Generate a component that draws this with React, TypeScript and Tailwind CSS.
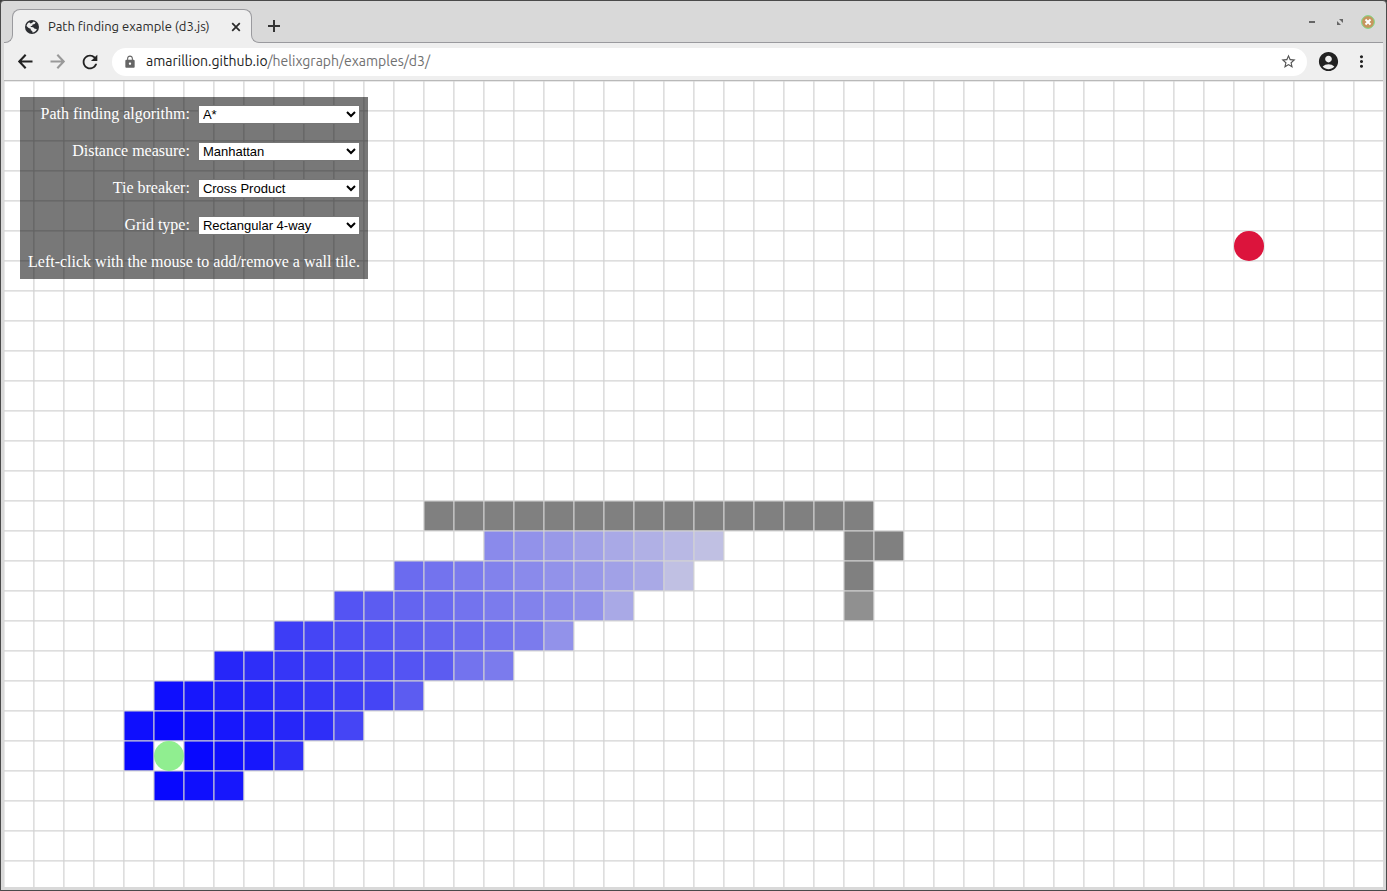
import { MdAccountCircle, MdLock, MdMoreVert, MdRefresh, MdStarBorder } from "react-icons/md";

const CELL = 30;
const COLUMNS = 90;
const ROWS = 50;
const START = { col: 5, row: 22 };
const GOAL = { col: 41, row: 5 };
const MAX_COST = 27.5;

// Explored columns per row; the last `detour` cells were reached two steps late.
const explored = [
  { row: 15, from: 16, to: 23, detour: 0 },
  { row: 16, from: 13, to: 22, detour: 1 },
  { row: 17, from: 11, to: 20, detour: 1 },
  { row: 18, from: 9, to: 18, detour: 1 },
  { row: 19, from: 7, to: 16, detour: 2 },
  { row: 20, from: 5, to: 13, detour: 1 },
  { row: 21, from: 4, to: 11, detour: 1 },
  { row: 22, from: 4, to: 9, detour: 1 },
  { row: 23, from: 5, to: 7, detour: 0 },
];

function costColor(cost: number) {
  const t = cost / MAX_COST;
  const rg = Math.round(211 * t);
  return `rgb(${rg}, ${rg}, ${Math.round(255 - 31 * t)})`;
}

function cellColor(col: number, row: number) {
  if (row === 14 && col >= 14 && col <= 28) return "#808080";
  if (row === 15 && (col === 28 || col === 29)) return "#808080";
  if (row === 16 && col === 28) return "#808080";
  if (row === 17 && col === 28) return "#909090";
  if (row === START.row && col === START.col) return "#ffffff";
  const span = explored.find((s) => s.row === row && col >= s.from && col <= s.to);
  if (!span) return "#ffffff";
  const distance = Math.abs(col - START.col) + Math.abs(row - START.row);
  return costColor(col > span.to - span.detour ? distance + 2 : distance);
}

const cells = Array.from({ length: COLUMNS * ROWS }, (_, i) => {
  const col = Math.floor(i / ROWS);
  const row = i % ROWS;
  return { col, row, fill: cellColor(col, row) };
});

function GridCanvas() {
  return (
    <svg className="col-start-1 row-start-1 h-full w-full" role="img" aria-label="Grid">
      {cells.map(({ col, row, fill }) => (
        <rect key={`${col}-${row}`} x={col * CELL} y={row * CELL} width={CELL} height={CELL} fill={fill} stroke="#d3d3d3" />
      ))}
      <circle cx={(START.col + 0.5) * CELL} cy={(START.row + 0.5) * CELL} r={15} fill="#90ee90" />
      <circle cx={(GOAL.col + 0.5) * CELL} cy={(GOAL.row + 0.5) * CELL} r={15} fill="#dc143c" />
    </svg>
  );
}

const settings = [
  { id: "algorithm", label: "Path finding algorithm:", options: ["A*", "Dijkstra", "Breadth first"] },
  { id: "distance", label: "Distance measure:", options: ["Manhattan", "Euclidean"] },
  { id: "tie", label: "Tie breaker:", options: ["Cross Product", "None"] },
  { id: "grid", label: "Grid type:", options: ["Rectangular 4-way", "Rectangular 8-way"] },
];

function SettingsPanel() {
  return (
    <form className="z-10 col-start-1 row-start-1 mt-4 ml-4 flex flex-col gap-[18px] self-start justify-self-start bg-black/53 p-2 font-['Liberation_Serif',serif] text-[16px] leading-[18px] text-white">
      {settings.map(({ id, label, options }) => (
        <div key={id} className="flex items-start justify-end gap-2">
          <label htmlFor={id}>{label}</label>
          <select id={id} className="h-[19px] w-[162px] border border-[#767676] bg-white font-['Liberation_Sans',sans-serif] text-[13px] leading-4 text-black">
            {options.map((option) => (
              <option key={option}>{option}</option>
            ))}
          </select>
        </div>
      ))}
      <p>Left-click with the mouse to add/remove a wall tile.</p>
    </form>
  );
}

function GlobeIcon() {
  return (
    <svg width="14" height="14" viewBox="0 0 14 14" aria-hidden="true">
      <circle cx="7" cy="7" r="7" fill="#2b2d31" />
      <path
        d="M8.6 1.6 10.6 2.5 9.6 4.1 7.6 4.5 7.2 5.8 5.6 6.2 5.8 7 8.2 7.2 9.3 8.6 11.9 9.2C11.1 11.1 9.4 12.3 7.4 12.5L7.3 10.9 5.8 10.2 5.7 8.8 3.6 8.1 1.5 6.1C1.8 4.4 2.8 3 4.2 2.2L5.4 3.4 7 3Z"
        fill="#efefef"
      />
    </svg>
  );
}

function LineIcon({ d, size, weight }: { d: string; size: number; weight: number }) {
  return (
    <svg width={size} height={size} viewBox="0 0 24 24" fill="none" stroke="currentColor" strokeWidth={weight} aria-hidden="true">
      <path d={d} />
    </svg>
  );
}

function TabStrip() {
  return (
    <header className="flex h-[42px] items-end border-b border-[#9a9a9e] bg-[#d9d9d9]">
      <div className="relative -mb-px ml-2 flex h-[34px] w-60 items-center rounded-t-lg border border-b-0 border-[#9a9a9e] bg-[#efefef] pl-3 pr-2 text-[#2b2b2b]">
        <span className="absolute bottom-0 -left-[9px] size-[9px] bg-[#efefef]">
          <span className="block size-full rounded-br-lg border-r border-b border-[#9a9a9e] bg-[#d9d9d9]" />
        </span>
        <span className="absolute -right-[9px] bottom-0 size-[9px] bg-[#efefef]">
          <span className="block size-full rounded-bl-lg border-b border-l border-[#9a9a9e] bg-[#d9d9d9]" />
        </span>
        <GlobeIcon />
        <span className="ml-[9px] flex-1 text-[13px] whitespace-nowrap">Path finding example (d3.js)</span>
        <button type="button" aria-label="Close tab">
          <LineIcon size={14} weight={3} d="M5.5 5.5l13 13M18.5 5.5l-13 13" />
        </button>
      </div>
      <button type="button" aria-label="New tab" className="mb-1.5 ml-3 text-[#333]">
        <LineIcon size={20} weight={2.4} d="M12 4.8v14.4M4.8 12h14.4" />
      </button>
      <div className="mb-[13px] ml-auto flex items-center gap-[17px] pr-2 text-[#666]">
        <button type="button" aria-label="Minimize" className="flex size-3.5 items-center justify-center">
          <svg width="8" height="8" viewBox="0 0 8 8"><path d="M1 3h6v2H1z" fill="currentColor" /></svg>
        </button>
        <button type="button" aria-label="Restore" className="flex h-3.5 w-2 items-center justify-center">
          <svg width="8" height="8" viewBox="0 0 8 8"><path d="M3 1h4v4zM1 3v4h4z" fill="currentColor" /></svg>
        </button>
        <button type="button" aria-label="Close window">
          <svg width="14" height="14" viewBox="0 0 14 14">
            <circle cx="7" cy="7" r="6.4" fill="#c7955f" stroke="#7fdc86" />
            <path d="M4.5 4.5l5 5M9.5 4.5l-5 5" stroke="#fff" strokeWidth="2" />
          </svg>
        </button>
      </div>
    </header>
  );
}

function Toolbar() {
  return (
    <nav className="flex h-[38px] items-center border-b border-[#b9b9b9] bg-[#efefef] pl-[11px] pr-3 text-[#222]">
      <div className="flex gap-[11px]">
        <button type="button" aria-label="Back">
          <LineIcon size={21} weight={2.4} d="M20 12H5.2M12.2 4.3L4.9 12l7.3 7.7" />
        </button>
        <button type="button" aria-label="Forward" className="text-[#999]">
          <LineIcon size={21} weight={2.4} d="M4 12h14.8M11.8 4.3L19.1 12l-7.3 7.7" />
        </button>
        <button type="button" aria-label="Reload">
          <MdRefresh size={22} />
        </button>
      </div>
      <div className="ml-[11px] flex h-7 flex-1 items-center rounded-full bg-white pr-2.5 pl-[11px]">
        <MdLock size={14} className="text-[#666]" />
        <a href="#" className="ml-[9px] flex-1 text-[14px] text-[#222]">
          amarillion.github.io<span className="text-[#707070]">/helixgraph/examples/d3/</span>
        </a>
        <button type="button" aria-label="Bookmark" className="text-[#555]"><MdStarBorder size={17} /></button>
      </div>
      <button type="button" aria-label="Profile" className="ml-2.5"><MdAccountCircle size={23} /></button>
      <button type="button" aria-label="Menu" className="ml-3"><MdMoreVert size={19} /></button>
    </nav>
  );
}

export default function App() {
  return (
    <div className="bg-[#3f3f3f]">
      <div className="flex h-screen flex-col overflow-hidden rounded-t border border-[#4a4a4a] bg-[#d9d9d9] px-[3px] pb-[3px] font-[Ubuntu,'Noto_Sans',sans-serif]">
        <TabStrip />
        <Toolbar />
        <main className="grid min-h-0 flex-1 grid-cols-1 grid-rows-1 overflow-hidden bg-white">
          <GridCanvas />
          <SettingsPanel />
        </main>
      </div>
    </div>
  );
}
